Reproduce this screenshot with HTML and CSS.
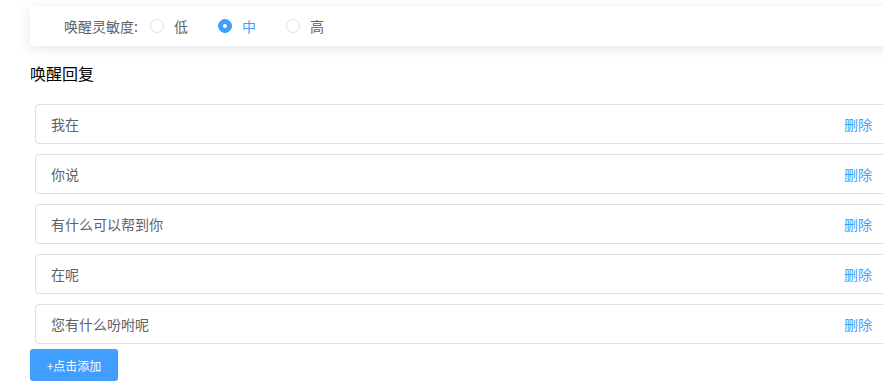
FILE: index.html
```html
<!DOCTYPE html>
<html lang="zh-CN">
<head>
  <meta charset="UTF-8">
  <title>唤醒设置</title>
  <link rel="stylesheet" href="styles.css">
</head>
<body>

<div class="page">

  <div class="card">
    <label class="form-label">唤醒灵敏度:</label>
    <div class="radio-group">
      <label class="radio">
        <span class="radio-input"></span><span class="radio-label">低</span>
      </label>
      <label class="radio is-checked">
        <span class="radio-input"></span><span class="radio-label">中</span>
      </label>
      <label class="radio">
        <span class="radio-input"></span><span class="radio-label">高</span>
      </label>
    </div>
  </div>

  <h3 class="section-title">唤醒回复</h3>

  <ul class="reply-list">
    <li class="reply-item"><span class="reply-text">我在</span><a href="#" class="link-del">删除</a></li>
    <li class="reply-item"><span class="reply-text">你说</span><a href="#" class="link-del">删除</a></li>
    <li class="reply-item"><span class="reply-text">有什么可以帮到你</span><a href="#" class="link-del">删除</a></li>
    <li class="reply-item"><span class="reply-text">在呢</span><a href="#" class="link-del">删除</a></li>
    <li class="reply-item"><span class="reply-text">您有什么吩咐呢</span><a href="#" class="link-del">删除</a></li>
  </ul>

  <button class="btn-primary">+点击添加</button>

</div>

</body>
</html>
```

FILE: styles.css
```css
/* element-ui like look */
html, body { margin: 0; padding: 0; background: #fff; overflow: hidden; }
body { font-family: "Noto Sans CJK SC", "Liberation Sans", sans-serif; font-size: 14px; color: #606266; }

.page { padding: 6px 0 0 30px; width: 880px; }

.card { display: flex; align-items: center; height: 40px; background: #fff; box-shadow: 0 2px 12px 0 rgba(0, 0, 0, 0.1); }
.form-label { width: 120px; box-sizing: border-box; padding-right: 12px; text-align: right; color: #606266; }
.radio-group { display: flex; align-items: center; }
.radio { display: flex; align-items: center; margin-right: 30px; cursor: pointer; }
.radio-input { width: 14px; height: 14px; box-sizing: border-box; border: 1px solid #dcdfe6; border-radius: 50%; background: #fff; position: relative; }
.radio-label { padding-left: 10px; }
.radio.is-checked .radio-input { background: #409eff; border-color: #409eff; }
.radio.is-checked .radio-input::after { content: ""; position: absolute; left: 50%; top: 50%; width: 4px; height: 4px; margin: -2px 0 0 -2px; border-radius: 50%; background: #fff; }
.radio.is-checked .radio-label { color: #409eff; }

.section-title { margin: 16px 0 0; height: 22px; line-height: 22px; font-size: 16px; font-weight: normal; color: #000; }

.reply-list { list-style: none; margin: 20px 0 0 5px; padding: 0; width: 853px; }
.reply-item { display: flex; align-items: center; justify-content: space-between; height: 40px; box-sizing: border-box; border: 1px solid #dcdfe6; border-radius: 4px; padding: 0 15px; margin-bottom: 10px; }
.reply-item:last-child { margin-bottom: 5px; }
.reply-text { color: #606266; }
.link-del { color: #409eff; text-decoration: none; }

.btn-primary { display: block; width: 88px; height: 32px; padding: 0; border: 0; border-radius: 3px; background: #409eff; color: #fff; font-family: inherit; font-size: 12px; cursor: pointer; }
```
